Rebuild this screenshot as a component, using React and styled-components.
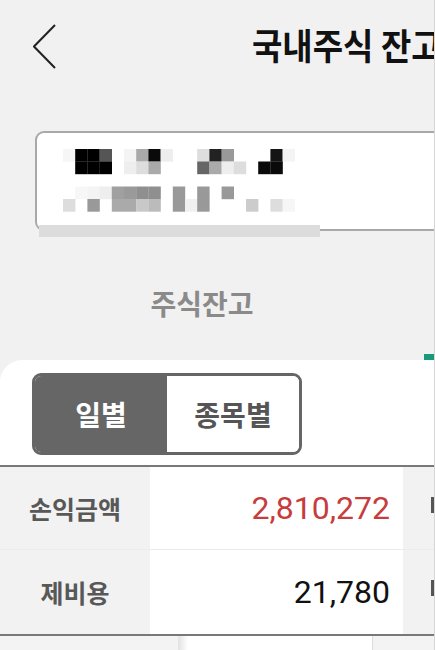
import React from 'react'
import styled, { createGlobalStyle } from 'styled-components'

const GlobalStyle = createGlobalStyle`
    html, body {
        margin: 0;
        padding: 0;
        background: #f1f1f1;
    }
    body {
        font-family: 'Noto Sans CJK KR', 'Noto Sans', sans-serif;
    }
`

// whole phone screen, cut off on the right
const Screen = styled.div`
    width: 434px;
    height: 650px;
    overflow: hidden;
    border-right: 1px solid #d6d6d6;
    background: #f1f1f1;
    display: flex;
    flex-direction: column;
`

const Header = styled.header`
    flex: 0 0 90px;
    display: flex;
    align-items: center;
    padding-left: 33px;
    white-space: nowrap;
    svg {
        flex: 0 0 auto;
        margin-top: 4px;
    }
`

const Title = styled.h1`
    margin: 0 0 0 195px;
    font-size: 33px;
    line-height: 40px;
    font-weight: 700;
    color: #111;
    transform: scaleY(1.1);
`

const AccountCard = styled.div`
    flex: 0 0 auto;
    align-self: flex-start;
    width: 430px;
    height: 100px;
    box-sizing: border-box;
    margin: 41px 0 0 35px;
    border: 2px solid #a9a9a9;
    border-radius: 9px;
    background: #fff;
    padding: 16px 0 0 26px;
`

const CardShadowBar = styled.div`
    flex: 0 0 12px;
    align-self: flex-start;
    width: 281px;
    margin: -6px 0 0 39px;
    background: #dcdcdc;
`

const TabBar = styled.nav`
    flex: 0 0 123px;
    display: flex;
    align-items: stretch;
`

const Tab = styled.div`
    flex: 0 0 ${p => p.$width}px;
    padding-top: ${p => (p.$active ? 0 : 49)}px;
    box-sizing: border-box;
    text-align: center;
    font-size: 28px;
    line-height: 34px;
    font-weight: 700;
    color: #8a8a8a;
    display: flex;
    flex-direction: column;
    justify-content: ${p => (p.$active ? 'flex-end' : 'flex-start')};
`

const TabUnderline = styled.div`
    height: 6px;
    margin-left: 20px;
    background: #17997a;
`

const Panel = styled.section`
    flex: 1;
    background: #fff;
    border-top-left-radius: 22px;
    display: flex;
    flex-direction: column;
`

const Segmented = styled.div`
    display: flex;
    width: 270px;
    height: 82px;
    box-sizing: border-box;
    margin: 13px 0 0 32px;
    border: 3px solid #666;
    border-radius: 9px;
    overflow: hidden;
`

const SegButton = styled.button`
    flex: 1;
    border: none;
    padding: 0;
    font-family: inherit;
    font-size: 28px;
    font-weight: 700;
    background: ${p => (p.$active ? '#666' : '#fff')};
    color: ${p => (p.$active ? '#fff' : '#555')};
`

const Table = styled.div`
    margin-top: 10px;
    border-top: 2px solid #787878;
    border-bottom: 2px solid #787878;
`

const Row = styled.div`
    display: grid;
    grid-template-columns: 150px 253px 1fr;
    height: ${p => p.$height}px;
    & + & {
        border-top: 1px solid #ececec;
    }
`

const LabelCell = styled.div`
    background: #f2f2f2;
    display: flex;
    align-items: center;
    justify-content: center;
    font-size: 25px;
    font-weight: 700;
    color: #585858;
`

const ValueCell = styled.div`
    background: #fff;
    display: flex;
    align-items: center;
    justify-content: flex-end;
    padding-right: 13px;
    font-family: Roboto, 'Liberation Sans', sans-serif;
    font-size: 32px;
    color: ${p => (p.$loss ? '#c73c3c' : '#111')};
`

const SideCell = styled.div`
    background: #f2f2f2;
    position: relative;
    &::after {
        content: '';
        position: absolute;
        right: 0;
        top: 30px;
        width: 3px;
        height: 16px;
        background: #555;
    }
`

const Footer = styled.div`
    flex: 1;
    display: flex;
`

const FooterCell = styled.div`
    flex: ${p => (p.$width ? `0 0 ${p.$width}px` : 1)};
    background: ${p => (p.$light ? '#fff' : '#f3f3f3')};
    background-image: ${p => (p.$light ? 'linear-gradient(90deg, #e2e2e2, #fff 10px)' : 'none')};
    border-left: ${p => (p.$edge ? '1px solid #dcdcdc' : 'none')};
`

// censored account info, drawn as mosaic tiles
const mosaic = [
    [0, 0, '#f6f6f6'], [1, 0, '#000'], [2, 0, '#000'], [3, 0, '#555'], [5, 0, '#f4f4f4'],
    [6, 0, '#aaa'], [7, 0, '#0a0a0a'], [8, 0, '#eee'], [11, 0, '#ddd'], [12, 0, '#222'],
    [13, 0, '#999'], [17, 0, '#151515'], [18, 0, '#f4f4f4'],
    [1, 1, '#000'], [2, 1, '#000'], [3, 1, '#000'], [5, 1, '#eee'], [6, 1, '#ddd'],
    [7, 1, '#aaa'], [11, 1, '#666'], [12, 1, '#aaa'], [13, 1, '#eee'], [14, 1, '#ddd'],
    [16, 1, '#0a0a0a'], [17, 1, '#0a0a0a'],
    [1, 3, '#f7f7f7'], [2, 3, '#f4f4f4'], [3, 3, '#eee'], [4, 3, '#a0a0a0'], [5, 3, '#9a9a9a'],
    [6, 3, '#8f8f8f'], [7, 3, '#8f8f8f'], [9, 3, '#999'], [11, 3, '#999'], [13, 3, '#999'],
    [0, 4, '#ddd'], [2, 4, '#999'], [4, 4, '#aaa'], [5, 4, '#aaa'], [6, 4, '#c8c8c8'],
    [7, 4, '#bbb'], [9, 4, '#999'], [10, 4, '#f0f0f0'], [11, 4, '#999'], [15, 4, '#ccc'],
    [17, 4, '#ddd'], [18, 4, '#f6f6f6'],
]

const Mosaic = () => (
    <svg width="244" height="63" viewBox="0 0 244 63">
        {mosaic.map(([c, r, fill], i) => (
            <rect key={i} x={c * 12.2} y={r * 12.5} width="12.4" height="12.7" fill={fill} />
        ))}
    </svg>
)

const BackIcon = () => (
    <svg width="24" height="48" viewBox="0 0 24 48" fill="none">
        <polyline points="22,2 1,23.5 22,45" stroke="#222" strokeWidth="2" />
    </svg>
)

export default function App() {
    const rows = [
        { label: '손익금액', value: '2,810,272', loss: true, height: 82 },
        { label: '제비용', value: '21,780', loss: false, height: 84 },
    ]
    return (
        <>
            <GlobalStyle />
            <Screen>
                <Header>
                    <BackIcon />
                    <Title>국내주식 잔고</Title>
                </Header>
                <AccountCard>
                    <Mosaic />
                </AccountCard>
                <CardShadowBar />
                <TabBar>
                    <Tab $width={404}>주식잔고</Tab>
                    <Tab $width={60} $active>
                        <TabUnderline />
                    </Tab>
                </TabBar>
                <Panel>
                    <Segmented>
                        <SegButton $active>일별</SegButton>
                        <SegButton>종목별</SegButton>
                    </Segmented>
                    <Table>
                        {rows.map(row => (
                            <Row key={row.label} $height={row.height}>
                                <LabelCell>{row.label}</LabelCell>
                                <ValueCell $loss={row.loss}>{row.value}</ValueCell>
                                <SideCell />
                            </Row>
                        ))}
                    </Table>
                    <Footer>
                        <FooterCell $width={178} />
                        <FooterCell $width={194} $light />
                        <FooterCell $edge />
                    </Footer>
                </Panel>
            </Screen>
        </>
    )
}
